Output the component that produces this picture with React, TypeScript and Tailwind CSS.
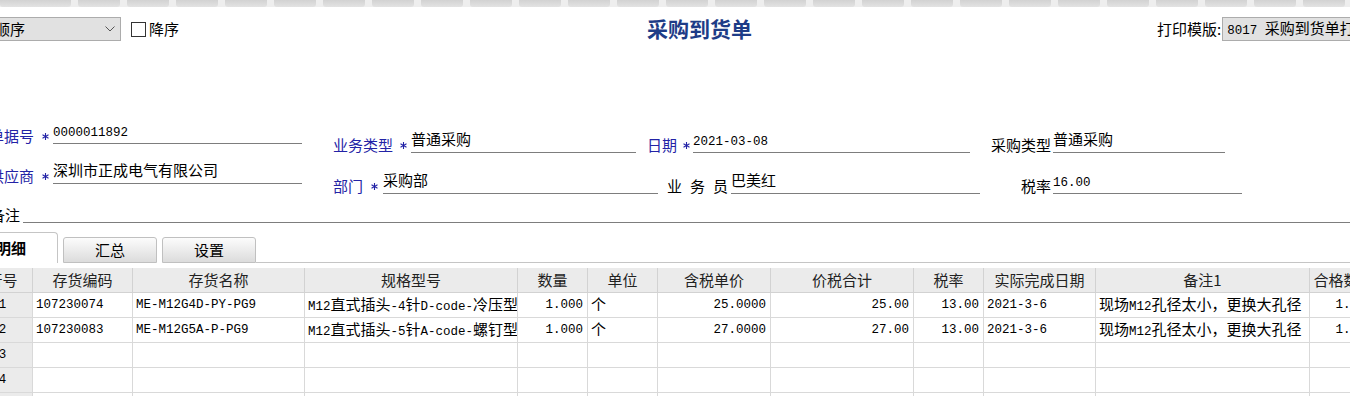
import React from 'react';

const CJK = "font-['Noto_Sans_CJK_SC',sans-serif]";
const BLUE = 'text-[#2323a6]';

// 拉丁字符用等宽小号，中文用 15px
const Mx = ({ t }: { t: string }) => (
    <span className="whitespace-pre">
        {t.split(/([\u3000-\u303f\u4e00-\u9fff\uff00-\uffef]+)/).map((s, i) =>
            i % 2 ? (
                <span key={i} className={`${CJK} text-[15px]`}>
                    {s}
                </span>
            ) : (
                s
            )
        )}
    </span>
);

const Star = ({ cls }: { cls: string }) => (
    <svg width="7" height="7" viewBox="0 0 7 7" className={`mb-[4px] shrink-0 ${cls}`}>
        <g stroke="#2323a6" strokeWidth="1.1">
            <line x1="3.5" y1="0" x2="3.5" y2="7" />
            <line x1="0.5" y1="1.8" x2="6.5" y2="5.2" />
            <line x1="0.5" y1="5.2" x2="6.5" y2="1.8" />
        </g>
    </svg>
);

interface FieldProps {
    label: React.ReactNode;
    labelCls: string;
    star?: string;
    lineCls: string;
    value: string;
}

const Field: React.FC<FieldProps> = ({ label, labelCls, star, lineCls, value }) => (
    <div className="flex h-[26px] shrink-0 items-end">
        <span className={`${CJK} shrink-0 text-[15px] leading-[17px] ${labelCls}`}>{label}</span>
        {star && <Star cls={star} />}
        <div className={`flex h-full shrink-0 items-end border-b border-[#7d7d7d] pb-[2px] leading-[16px] ${lineCls}`}>
            <Mx t={value} />
        </div>
    </div>
);

const cols = [60, 100, 172, 213, 70, 70, 113, 143, 70, 112, 214, 68];
const aligns = ['center', 'left', 'left', 'left', 'right', 'left', 'right', 'right', 'right', 'left', 'left', 'right'];
const heads = ['行号', '存货编码', '存货名称', '规格型号', '数量', '单位', '含税单价', '价税合计', '税率', '实际完成日期', '备注1', '合格数量'];
const rows: string[][] = [
    ['1', '107230074', 'ME-M12G4D-PY-PG9', 'M12直式插头-4针D-code-冷压型', '1.000', '个', '25.0000', '25.00', '13.00', '2021-3-6', '现场M12孔径太小，更换大孔径', '1.000'],
    ['2', '107230083', 'ME-M12G5A-P-PG9', 'M12直式插头-5针A-code-螺钉型', '1.000', '个', '27.0000', '27.00', '13.00', '2021-3-6', '现场M12孔径太小，更换大孔径', '1.000'],
    ['3', '', '', '', '', '', '', '', '', '', '', ''],
    ['4', '', '', '', '', '', '', '', '', '', '', ''],
    ['5', '', '', '', '', '', '', '', '', '', '', ''],
];

const alignCls = (a: string) =>
    a === 'center' ? 'justify-center' : a === 'right' ? 'justify-end pr-[4px]' : 'justify-start pl-[3px]';

export default function App() {
    return (
        <div className="h-[396px] w-[1350px] overflow-hidden bg-white font-['Liberation_Mono','Noto_Sans_CJK_SC',monospace] text-[12.5px] text-black">
            {/* 顶部工具栏残边 */}
            <div className="flex h-[7px] gap-[7px] bg-[#eeeeee]">
                <div className="w-[71px] shrink-0 rounded-b-[3px] bg-linear-to-b from-[#d2d2d2] to-[#e3e3e3]" />
                {Array.from({ length: 26 }).map((_, i) => (
                    <div key={i} className="w-[42px] shrink-0 rounded-b-[3px] bg-linear-to-b from-[#d2d2d2] to-[#e3e3e3]" />
                ))}
            </div>

            <div className="mt-[10px] flex h-[24px] items-center">
                <div className={`${CJK} ml-[-30px] flex h-[24px] w-[151px] shrink-0 items-center border border-[#acacac] bg-[#e1e1e1] pl-[24px] text-[15px]`}>
                    顺序
                    <svg width="10" height="6" viewBox="0 0 10 6" className="ml-auto mr-[5px]">
                        <polyline points="0.5,0.5 5,5 9.5,0.5" fill="none" stroke="#555" strokeWidth="1" />
                    </svg>
                </div>
                <div className="ml-[10px] h-[15px] w-[15px] shrink-0 border border-[#333] bg-white" />
                <span className={`${CJK} ml-[3px] shrink-0 text-[15px]`}>降序</span>
                <span className={`${CJK} ml-[468px] shrink-0 text-[21px] font-bold text-[#1d3c87]`}>采购到货单</span>
                <span className={`${CJK} ml-[405px] shrink-0 text-[15px]`}>打印模版:</span>
                <div className="ml-[1px] flex h-[24px] w-[220px] shrink-0 items-center border border-[#acacac] bg-[#e1e1e1] pl-[4px]">
                    <Mx t="8017 采购到货单打印模版" />
                </div>
            </div>

            {/* 表头字段 */}
            <div className="mt-[77px] flex items-start">
                <div className="ml-[-12px] flex w-[314px] shrink-0 flex-col gap-[14px]">
                    <Field label="单据号" labelCls={`w-[46px] text-right ${BLUE}`} star="ml-[8px]" lineCls="ml-[4px] w-[249px]" value="0000011892" />
                    <Field label="供应商" labelCls={`w-[46px] text-right ${BLUE}`} star="ml-[8px]" lineCls="ml-[4px] w-[249px]" value="深圳市正成电气有限公司" />
                </div>
                <div className="mt-[9px] flex flex-col gap-[15px]">
                    <div className="flex">
                        <Field label="业务类型" labelCls={`ml-[31px] ${BLUE}`} star="ml-[7px]" lineCls="ml-[4px] w-[225px]" value="普通采购" />
                        <Field label="日期" labelCls={`ml-[11px] ${BLUE}`} star="ml-[6px]" lineCls="ml-[3px] w-[277px]" value="2021-03-08" />
                        <Field label="采购类型" labelCls="ml-[21px]" lineCls="ml-[2px] w-[172px]" value="普通采购" />
                    </div>
                    <div className="flex">
                        <Field label="部门" labelCls={`ml-[31px] ${BLUE}`} star="ml-[8px]" lineCls="ml-[5px] w-[275px]" value="采购部" />
                        <Field
                            label={
                                <span className="flex gap-[8px]">
                                    <span>业</span>
                                    <span>务</span>
                                    <span>员</span>
                                </span>
                            }
                            labelCls="ml-[9px]"
                            lineCls="ml-[3px] w-[249px]"
                            value="巴美红"
                        />
                        <Field label="税率" labelCls="ml-[41px]" lineCls="ml-[2px] w-[189px]" value="16.00" />
                    </div>
                </div>
            </div>

            <div className="ml-[-10px] mt-[3px] flex h-[26px] items-end">
                <span className={`${CJK} shrink-0 text-[15px] leading-[17px]`}>备注</span>
                <div className="ml-[3px] h-full flex-1 border-b border-[#7d7d7d]" />
            </div>

            {/* 页签 */}
            <div className={`${CJK} mt-[9px] flex h-[31px] items-end text-[15px]`}>
                <div className="ml-[-36px] flex h-[31px] w-[94px] shrink-0 items-center justify-center rounded-t-[4px] border border-b-0 border-[#c5c5c5] bg-white font-bold">
                    明细
                </div>
                <div className="ml-[5px] flex h-[26px] w-[94px] shrink-0 items-center justify-center rounded-t-[3px] border border-[#c0c0c0] bg-linear-to-b from-[#fcfcfc] to-[#dcdcdc]">
                    汇总
                </div>
                <div className="ml-[5px] flex h-[26px] w-[94px] shrink-0 items-center justify-center rounded-t-[3px] border border-[#c0c0c0] bg-linear-to-b from-[#fcfcfc] to-[#dcdcdc]">
                    设置
                </div>
                <div className="h-full flex-1 border-b border-[#c5c5c5]" />
            </div>

            {/* 明细表格 */}
            <div className="ml-[-27px] mt-[5px]">
                <div className={`${CJK} flex h-[25px] bg-[#ebebeb] text-[15px] text-[#222]`}>
                    {heads.map((h, i) => (
                        <div
                            key={i}
                            style={{ width: cols[i] }}
                            className="flex shrink-0 items-center justify-center whitespace-nowrap border-r border-b border-[#d2d2d2]"
                        >
                            <Mx t={h} />
                        </div>
                    ))}
                </div>
                {rows.map((r, ri) => (
                    <div key={ri} className="flex h-[25px]">
                        {r.map((c, ci) => (
                            <div
                                key={ci}
                                style={{ width: cols[ci] }}
                                className={`flex shrink-0 items-center overflow-hidden border-r border-b border-[#d9d9d9] ${alignCls(aligns[ci])} ${ci === 0 ? 'bg-[#ebebeb]' : 'bg-white'}`}
                            >
                                <Mx t={c} />
                            </div>
                        ))}
                    </div>
                ))}
            </div>
        </div>
    );
}
